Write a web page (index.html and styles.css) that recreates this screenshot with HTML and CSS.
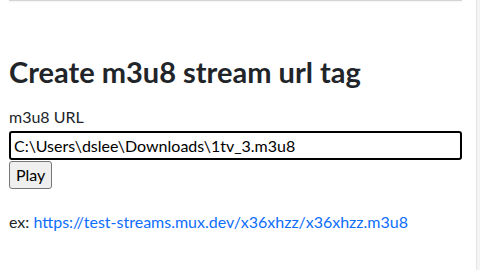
FILE: index.html
```html
<!DOCTYPE html>
<html lang="en">
<head>
  <meta charset="UTF-8" />
  <meta name="viewport" content="width=device-width, initial-scale=1.0"/>
  <title>Create m3u8 stream url tag</title>
  <link rel="stylesheet" href="styles.css">
</head>
<body>

<div class="page">
  <!-- bottom edge of the player above -->
  <div class="player-edge"></div>

  <h1>Create m3u8 stream url tag</h1>

  <div class="form">
    <label for="url">m3u8 URL</label>
    <input id="url" type="text" value="C:\Users\dslee\Downloads\1tv_3.m3u8" />
    <div><button>Play</button></div>
  </div>

  <p class="example">ex: <a href="#">https://test-streams.mux.dev/x36xhzz/x36xhzz.m3u8</a></p>
</div>

<div class="scroll-track"></div>

</body>
</html>
```

FILE: styles.css
```css
body { margin: 0; background: #fff; font-family: "Lato", sans-serif; color: #212529; font-size: 16px; }
.page { width: 453px; padding-left: 9px; }
.player-edge { height: 1px; background: #d4d4d4; box-shadow: 0 1px 2px #eee; }
h1 { font-size: 29px; font-weight: 700; line-height: 1.2; margin: 54px 0 16px; }
.form label { display: block; line-height: 22px; margin-bottom: 3px; }
.form input {
  box-sizing: border-box; width: 453px; height: 29px; margin: 0;
  border: 2px solid #000; border-radius: 3px; padding: 0 3px;
  font-family: inherit; font-size: 16px; color: #000; outline: none;
}
.form button {
  margin-top: 1px; height: 28px; padding: 0 6px;
  font-family: inherit; font-size: 16px; color: #000;
  background: #efefef; border: 1px solid #767676; border-radius: 3px;
}
.example { margin: 23px 0 0; }
.example a { color: #0d6efd; text-decoration: none; }
.scroll-track { position: fixed; top: 0; right: 0; width: 3px; height: 100%; background: #f4f4f4; border-left: 1px solid #e4e4e4; }
```
